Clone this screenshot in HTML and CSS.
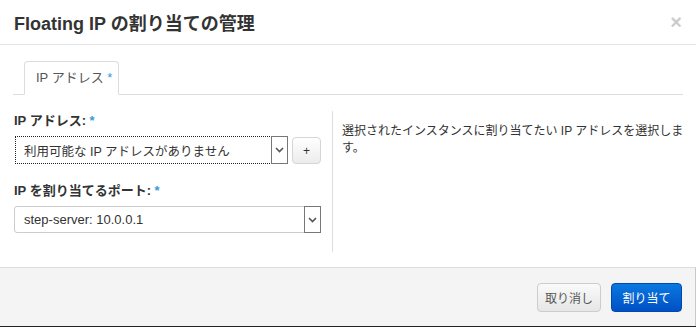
FILE: index.html
```html
<!DOCTYPE html>
<html lang="ja">
<head>
  <meta charset="UTF-8">
  <title>Floating IP の割り当ての管理</title>
  <link rel="stylesheet" href="styles.css">
</head>
<body>

<div class="modal">
  <div class="modal-header">
    <h3>Floating IP の割り当ての管理</h3>
    <span class="close">&times;</span>
  </div>

  <div class="modal-body">
    <ul class="nav-tabs">
      <li class="active">IP アドレス <span class="req">*</span></li>
    </ul>

    <div class="row">
      <div class="col-left">
        <label>IP アドレス: <span class="req">*</span></label>
        <div class="select-row">
          <div class="select focused">
            <span class="select-text">利用可能な IP アドレスがありません</span>
            <span class="select-arrow">
              <svg width="9" height="6" viewBox="0 0 9 6"><path d="M1 1 L4.5 4.5 L8 1" fill="none" stroke="#555" stroke-width="1.6"/></svg>
            </span>
          </div>
          <button class="btn btn-add" type="button">+</button>
        </div>

        <label class="second">IP を割り当てるポート: <span class="req">*</span></label>
        <div class="select">
          <span class="select-text latin">step-server: 10.0.0.1</span>
          <span class="select-arrow">
            <svg width="9" height="6" viewBox="0 0 9 6"><path d="M1 1 L4.5 4.5 L8 1" fill="none" stroke="#555" stroke-width="1.6"/></svg>
          </span>
        </div>
      </div>

      <div class="col-right">
        <p>選択されたインスタンスに割り当てたい IP アドレスを選択します。</p>
      </div>
    </div>
  </div>

  <div class="modal-footer">
    <button class="btn btn-cancel" type="button">取り消し</button>
    <button class="btn btn-primary" type="button">割り当て</button>
  </div>
</div>

</body>
</html>
```

FILE: styles.css
```css
* { box-sizing: border-box; }

body {
  margin: 0;
  font-family: "Liberation Sans", "Noto Sans CJK JP", sans-serif;
  font-size: 13px;
  color: #333;
  background: #fff;
}

.modal {
  width: 696px;
  height: 327px;
  display: flex;
  flex-direction: column;
  border-bottom: 1px solid #222;
  background: #fff;
}

.modal-header {
  height: 45px;
  flex: none;
  display: flex;
  align-items: center;
  justify-content: space-between;
  padding: 0 14px;
  border-bottom: 1px solid #e5e5e5;
}

.modal-header h3 {
  margin: 0;
  font-size: 18px;
  font-weight: bold;
  color: #333;
}

.close {
  font-size: 20px;
  font-weight: bold;
  color: #000;
  opacity: 0.2;
  line-height: 1;
}

.modal-body {
  flex: 1;
  padding: 16px 13px 0;
}

.nav-tabs {
  list-style: none;
  margin: 0;
  padding: 0 0 0 11px;
  display: flex;
  border-bottom: 1px solid #ddd;
}

.nav-tabs li {
  width: 95px;
  height: 34px;
  margin-bottom: -1px;
  padding-left: 11px;
  line-height: 31px;
  color: #555;
  background: #fff;
  border: 1px solid #ddd;
  border-bottom-color: #fff;
  border-radius: 4px 4px 0 0;
}

.req {
  color: #3a9ad9;
}

.row {
  display: flex;
  margin-top: 16px;
}

.col-left {
  flex: none;
  width: 320px;
  padding: 1px 11px 19px 1px;
  border-right: 1px solid #ddd;
}

.col-left label {
  display: block;
  font-weight: bold;
  line-height: 18px;
  margin-bottom: 6px;
}

.col-left label.second {
  margin-top: 18px;
}

.select-row {
  display: flex;
  gap: 4px;
  padding-left: 1px;
}

.select {
  display: flex;
  align-items: center;
  height: 27px;
  border: 1px solid #ccc;
  border-radius: 3px;
  background: #fff;
}

.select-row .select {
  flex: 1;
  height: 28px;
}

.select.focused {
  border: 1px dotted #222;
  border-radius: 0;
}

.select-text {
  flex: 1;
  padding-left: 8px;
  font-size: 12.5px;
  white-space: nowrap;
}

.select-text.latin {
  font-size: 13px;
  padding-left: 9px;
}

.select-arrow {
  align-self: stretch;
  width: 17px;
  margin: -1px -1px -1px 0;
  display: flex;
  align-items: center;
  justify-content: center;
  border: 1px solid #777;
  background: #fff;
}

.col-right {
  flex: none;
  width: 358px;
  margin-right: -8px;
  padding: 12px 0 0 9px;
  font-size: 12px;
  line-height: 17px;
}

.col-right p {
  margin: 0;
}

.btn {
  font-family: "Liberation Sans", "Noto Sans CJK JP", sans-serif;
  font-size: 12px;
  border-radius: 4px;
  cursor: pointer;
}

.btn-add {
  width: 29px;
  height: 27px;
  margin-top: 1px;
  padding: 0;
  color: #333;
  border: 1px solid #d5d5d5;
  background: linear-gradient(#fff, #ececec);
}

.modal-footer {
  height: 59px;
  flex: none;
  display: flex;
  justify-content: flex-end;
  align-items: center;
  gap: 10px;
  padding: 0 13px 0 0;
  background: #f4f4f4;
  border-top: 1px solid #ddd;
  border-right: 1px solid #c8c8c8;
}

.btn-cancel {
  width: 64px;
  height: 29px;
  color: #555;
  border: 1px solid #ccc;
  background: linear-gradient(#fafafa, #e6e6e6);
}

.btn-primary {
  width: 71px;
  height: 29px;
  color: #fff;
  border: 1px solid #0048b0;
  background: linear-gradient(#0a78e0, #0050c4);
}
```
